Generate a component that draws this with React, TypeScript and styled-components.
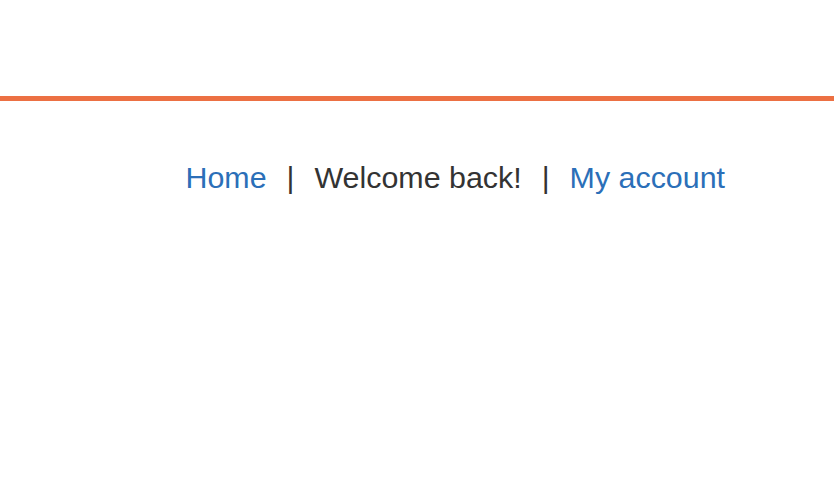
import React from "react";
import styled, { createGlobalStyle } from "styled-components";

const GlobalStyle = createGlobalStyle`
  html, body {
    margin: 0;
    padding: 0;
    background: #fff;
  }
  body {
    font-family: "Liberation Sans", Arial, sans-serif;
  }
`;

const Header = styled.header`
  height: 96px;
  border-bottom: 5px solid #ec7043;
`;

const Nav = styled.nav`
  display: flex;
  align-items: baseline;
  gap: 20px;
  padding: 59px 0 0 185.5px;
  font-size: 30.4px;
  line-height: normal;
  color: #333;
`;

const NavLink = styled.a`
  color: #2b6fb8;
  text-decoration: none;
`;

const Separator = styled.span`
  color: #333;
`;

const App = () => {
  return (
    <>
      <GlobalStyle />
      <Header />
      <Nav>
        <NavLink href="#">Home</NavLink>
        <Separator>|</Separator>
        <span>Welcome back!</span>
        <Separator>|</Separator>
        <NavLink href="#">My account</NavLink>
      </Nav>
    </>
  );
};

export default App;
